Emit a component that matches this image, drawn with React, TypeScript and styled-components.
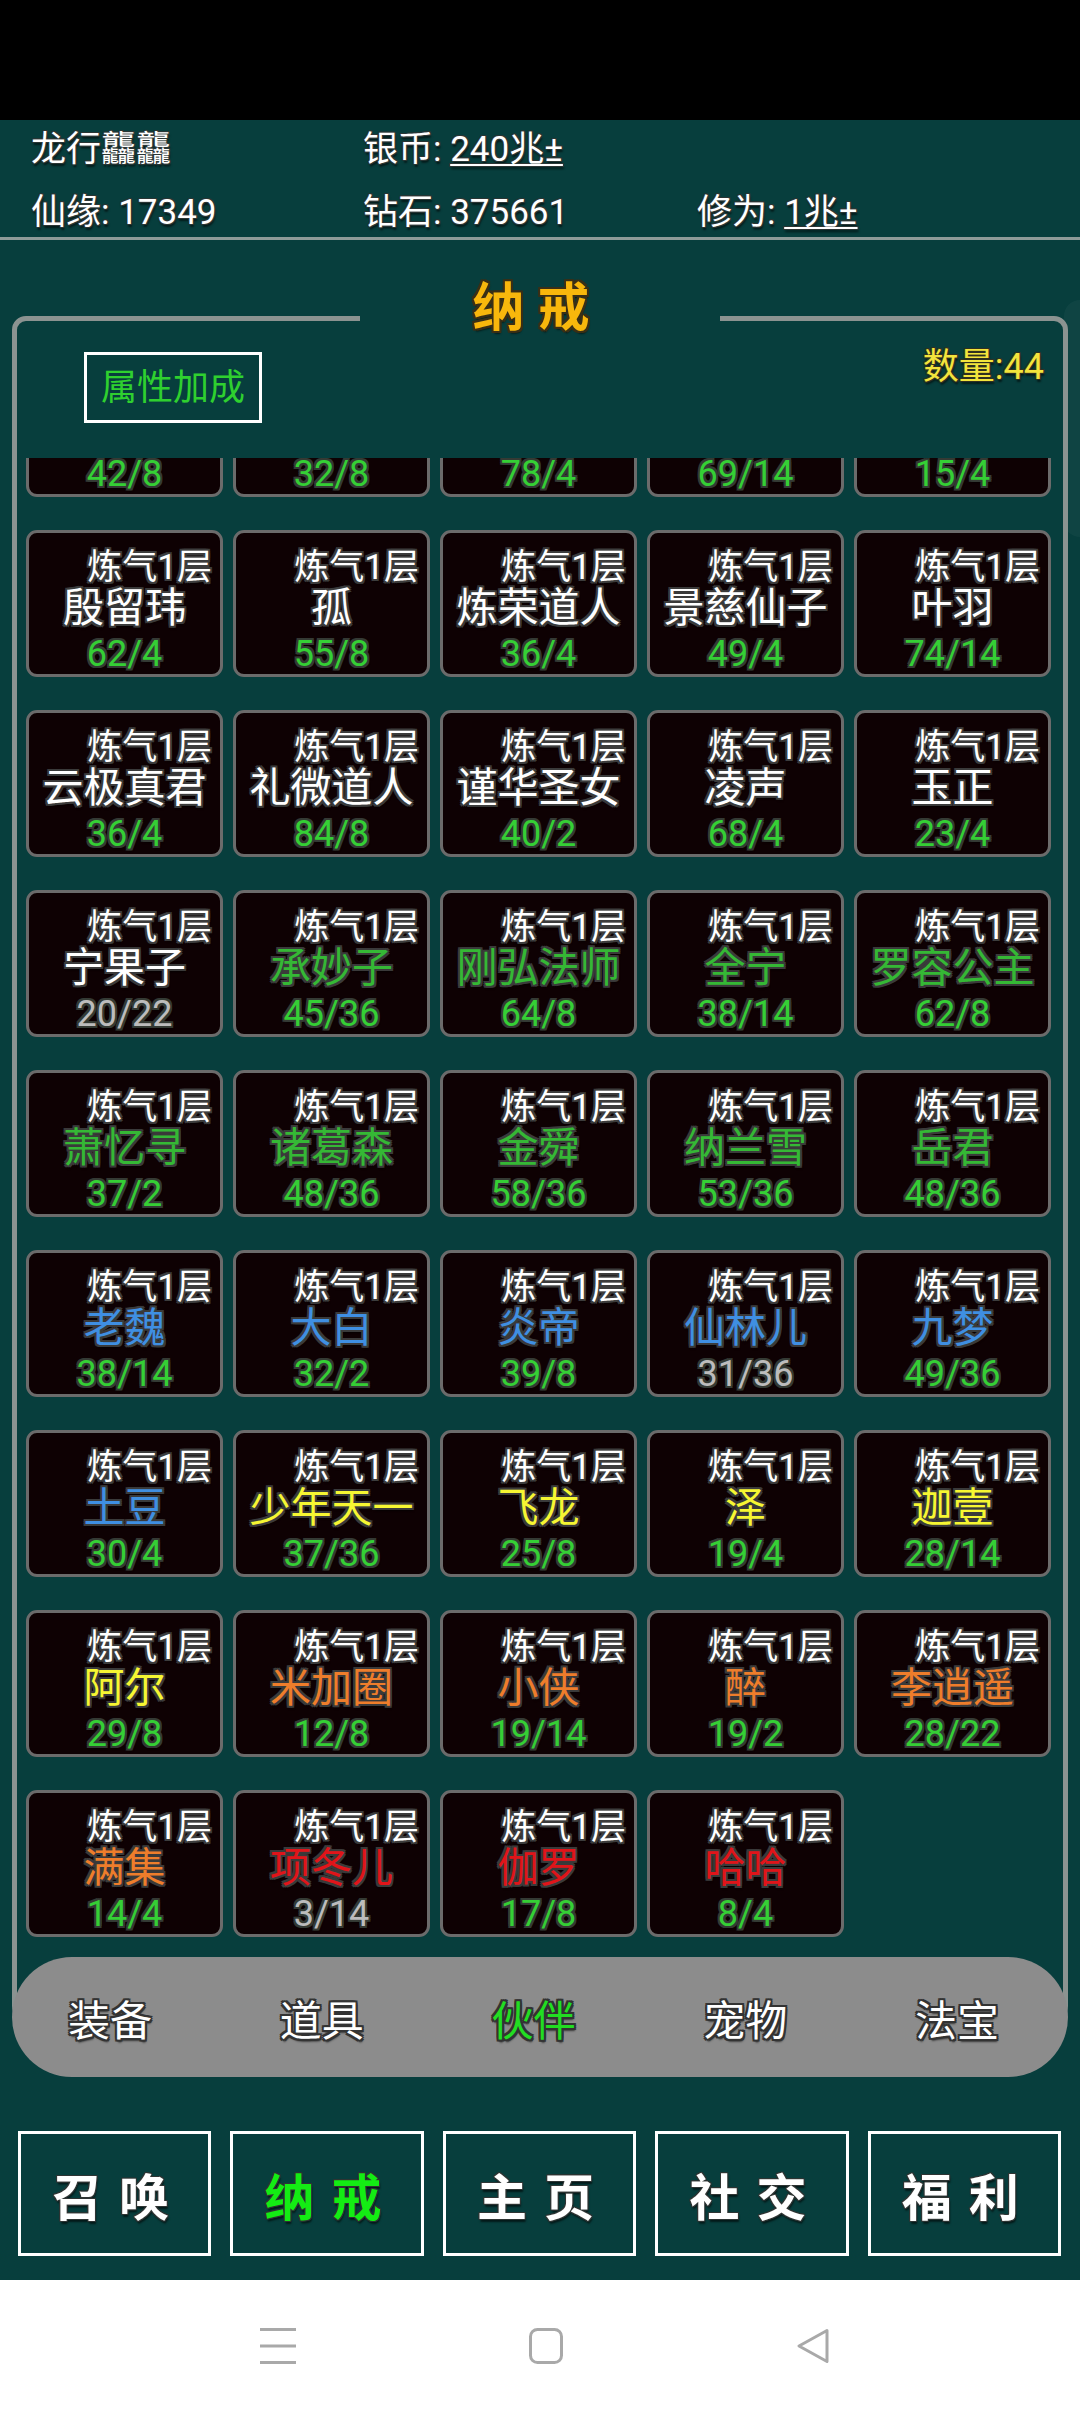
import React, { useLayoutEffect, useRef } from "react";
import styled, { createGlobalStyle, css } from "styled-components";

const TEAL = "#073e3d";

const GlobalStyle = createGlobalStyle`
  html, body { margin: 0; padding: 0; background: #ffffff; }
  body { font-family: Roboto, "Noto Sans CJK SC", sans-serif; }
  * { box-sizing: border-box; }
`;

const outline = (c: string, w = 2) => css`
  text-shadow: -${w}px -${w}px 0 ${c}, ${w}px -${w}px 0 ${c}, -${w}px ${w}px 0 ${c},
    ${w}px ${w}px 0 ${c}, 0 ${w}px 0 ${c}, 0 -${w}px 0 ${c}, ${w}px 0 0 ${c}, -${w}px 0 0 ${c},
    1px 3px 2px rgba(0, 0, 0, 0.6);
`;

const Screen = styled.div`
  width: 1080px;
  height: 2412px;
  display: flex;
  flex-direction: column;
  overflow: hidden;
`;

const StatusBar = styled.div`
  height: 120px;
  flex: none;
  background: #000;
`;

const Header = styled.header`
  flex: none;
  height: 120px;
  background: ${TEAL};
  border-bottom: 3px solid #8e9b99;
  padding: 5px 0 0 31px;
  display: grid;
  grid-template-columns: 332px 334px 1fr;
  grid-template-rows: 50px 50px;
  row-gap: 13px;
  align-items: center;
`;

const HeaderCell = styled.div`
  color: #fff;
  font-size: 35px;
  line-height: 50px;
  white-space: nowrap;
  ${outline("#2a3534", 1)}
`;

const Under = styled.span`
  text-decoration: underline;
  text-decoration-thickness: 2px;
  text-underline-offset: 3px;
`;

const Panel = styled.main`
  flex: 1;
  position: relative;
  background: ${TEAL};
  display: flex;
  flex-direction: column;
  padding: 76px 12px 24px;
`;

const EdgeGlow = styled.div`
  position: absolute;
  right: 0;
  top: 60px;
  width: 16px;
  height: 237px;
  border-radius: 16px 0 0 16px;
  background: rgba(255, 255, 255, 0.035);
`;

const Frame = styled.section`
  position: relative;
  border: 5px solid #8b9391;
  border-radius: 14px;
  padding-bottom: 60px;
  display: flex;
  flex-direction: column;
`;

const Title = styled.h1`
  position: absolute;
  top: -53px;
  left: 50%;
  transform: translateX(-50%);
  width: 360px;
  height: 70px;
  margin: 0;
  padding-right: 18px;
  background: ${TEAL};
  display: flex;
  align-items: center;
  justify-content: center;
  font-size: 52px;
  font-weight: 700;
  color: #f8b70c;
  white-space: pre;
  ${outline("#3a2f16", 2)}
`;

const TopBar = styled.div`
  height: 137px;
  display: flex;
  justify-content: space-between;
  align-items: flex-start;
  padding: 26px 19px 0 67px;
`;

const AttrButton = styled.button`
  margin-top: 5px;
  width: 178px;
  height: 71px;
  border: 3px solid #ffffff;
  background: transparent;
  color: #2fd02f;
  font-family: inherit;
  font-size: 36px;
  line-height: 44px;
  display: flex;
  align-items: center;
  justify-content: center;
  padding: 0;
`;

const Count = styled.div`
  color: #f3e43c;
  font-size: 36px;
  line-height: 40px;
  ${outline("#303020", 1)}
`;

const Scroller = styled.div`
  height: 1497px;
  overflow-y: auto;
  scrollbar-width: none;
  &::-webkit-scrollbar {
    display: none;
  }
`;

const Grid = styled.div`
  display: grid;
  grid-template-columns: repeat(5, 197px);
  grid-auto-rows: 147px;
  column-gap: 10px;
  row-gap: 33px;
  padding: 0 12px 30px 9px;
`;

const Card = styled.div`
  border: 3px solid #6b6b6b;
  border-radius: 11px;
  background: #0e0103;
  padding: 15px 8px 0;
  display: flex;
  flex-direction: column;
  white-space: nowrap;
`;

const Level = styled.div`
  text-align: right;
  font-size: 35px;
  line-height: 40px;
  color: #ffffff;
  ${outline("#3c3c3c", 2)}
`;

const Name = styled.div<{ $c: string }>`
  text-align: center;
  font-size: 41px;
  line-height: 40px;
  color: ${(p) => p.$c};
  ${outline("#3a3a3a", 2)}
`;

const Stat = styled.div<{ $c: string }>`
  margin-top: 6px;
  text-align: center;
  font-size: 36px;
  line-height: 40px;
  color: ${(p) => p.$c};
  ${outline("#343a34", 2)}
`;

const TabPill = styled.nav`
  position: relative;
  z-index: 1;
  margin-top: -63px;
  height: 120px;
  background: #8c8c8c;
  border-radius: 60px;
  display: flex;
  align-items: center;
  justify-content: space-between;
  padding: 0 69px 0 56px;
`;

const TabLabel = styled.span<{ $active?: boolean }>`
  font-size: 42px;
  color: ${(p) => (p.$active ? "#22dd22" : "#ffffff")};
  ${outline("#333333", 2)}
`;

const NavRow = styled.div`
  margin-top: 54px;
  display: flex;
  gap: 19px;
  padding: 0 7px 0 6px;
`;

const NavButton = styled.button<{ $active?: boolean }>`
  flex: 1;
  height: 125px;
  border: 3px solid #ffffff;
  background: transparent;
  display: flex;
  align-items: center;
  justify-content: center;
  padding: 0;
  font-family: inherit;
  font-size: 50px;
  font-weight: 700;
  color: ${(p) => (p.$active ? "#14ec14" : "#ffffff")};
  ${outline("#2e3433", 1)}
`;

const NavText = styled.span`
  letter-spacing: 17px;
  margin-right: -9px;
`;

const SystemBar = styled.div`
  flex: none;
  height: 132px;
  background: #ffffff;
  display: flex;
  align-items: center;
  padding-left: 260px;
  gap: 233px;
`;

type NC = "white" | "green" | "blue" | "yellow" | "orange" | "red";
const nameColor: Record<NC, string> = {
  white: "#ffffff",
  green: "#35b835",
  blue: "#3f8fe2",
  yellow: "#f6f632",
  orange: "#ee7d2b",
  red: "#e01419",
};
const statColor = { g: "#35cf35", s: "#bcbcbc" };

type Member = { n: string; c: NC; s: string; sc?: "g" | "s" };

const members: Member[] = [
  { n: "青云子", c: "white", s: "42/8" },
  { n: "明月", c: "white", s: "32/8" },
  { n: "白泽", c: "white", s: "78/4" },
  { n: "灵虚子", c: "white", s: "69/14" },
  { n: "玄机", c: "white", s: "15/4" },

  { n: "殷留玮", c: "white", s: "62/4" },
  { n: "孤", c: "white", s: "55/8" },
  { n: "炼荣道人", c: "white", s: "36/4" },
  { n: "景慈仙子", c: "white", s: "49/4" },
  { n: "叶羽", c: "white", s: "74/14" },

  { n: "云极真君", c: "white", s: "36/4" },
  { n: "礼微道人", c: "white", s: "84/8" },
  { n: "谨华圣女", c: "white", s: "40/2" },
  { n: "凌声", c: "white", s: "68/4" },
  { n: "玉正", c: "white", s: "23/4" },

  { n: "宁果子", c: "white", s: "20/22", sc: "s" },
  { n: "承妙子", c: "green", s: "45/36" },
  { n: "刚弘法师", c: "green", s: "64/8" },
  { n: "全宁", c: "green", s: "38/14" },
  { n: "罗容公主", c: "green", s: "62/8" },

  { n: "萧忆寻", c: "green", s: "37/2" },
  { n: "诸葛森", c: "green", s: "48/36" },
  { n: "金舜", c: "green", s: "58/36" },
  { n: "纳兰雪", c: "green", s: "53/36" },
  { n: "岳君", c: "green", s: "48/36" },

  { n: "老魏", c: "blue", s: "38/14" },
  { n: "大白", c: "blue", s: "32/2" },
  { n: "炎帝", c: "blue", s: "39/8" },
  { n: "仙林儿", c: "blue", s: "31/36", sc: "s" },
  { n: "九梦", c: "blue", s: "49/36" },

  { n: "土豆", c: "blue", s: "30/4" },
  { n: "少年天一", c: "yellow", s: "37/36" },
  { n: "飞龙", c: "yellow", s: "25/8" },
  { n: "泽", c: "yellow", s: "19/4" },
  { n: "迦壹", c: "yellow", s: "28/14" },

  { n: "阿尔", c: "yellow", s: "29/8" },
  { n: "米加圈", c: "orange", s: "12/8" },
  { n: "小侠", c: "orange", s: "19/14" },
  { n: "醉", c: "orange", s: "19/2" },
  { n: "李逍遥", c: "orange", s: "28/22" },

  { n: "满集", c: "orange", s: "14/4" },
  { n: "项冬儿", c: "red", s: "3/14", sc: "s" },
  { n: "伽罗", c: "red", s: "17/8" },
  { n: "哈哈", c: "red", s: "8/4" },
];

const tabs = ["装备", "道具", "伙伴", "宠物", "法宝"];
const navs = ["召唤", "纳戒", "主页", "社交", "福利"];

const MenuIcon = () => (
  <svg width="36" height="36" viewBox="0 0 36 36">
    <g stroke="#a9a9a9" strokeWidth="3">
      <line x1="0" y1="1.5" x2="36" y2="1.5" />
      <line x1="0" y1="18" x2="36" y2="18" />
      <line x1="0" y1="34.5" x2="36" y2="34.5" />
    </g>
  </svg>
);

const HomeIcon = () => (
  <svg width="34" height="36" viewBox="0 0 34 36">
    <rect x="1.5" y="1.5" width="31" height="33" rx="7" fill="none" stroke="#a9a9a9" strokeWidth="3" />
  </svg>
);

const BackIcon = () => (
  <svg width="34" height="36" viewBox="0 0 34 36">
    <path
      d="M31 2.5 L3 18 L31 33.5 Z"
      fill="none"
      stroke="#a9a9a9"
      strokeWidth="3"
      strokeLinejoin="round"
    />
  </svg>
);

export default function App() {
  const scrollRef = useRef<HTMLDivElement>(null);
  useLayoutEffect(() => {
    if (scrollRef.current) scrollRef.current.scrollTop = 108;
  }, []);

  return (
    <Screen>
      <GlobalStyle />
      <StatusBar />
      <Header>
        <HeaderCell>龙行龘龘</HeaderCell>
        <HeaderCell>
          银币: <Under>240兆±</Under>
        </HeaderCell>
        <HeaderCell />
        <HeaderCell>仙缘: 17349</HeaderCell>
        <HeaderCell>钻石: 375661</HeaderCell>
        <HeaderCell>
          修为: <Under>1兆±</Under>
        </HeaderCell>
      </Header>
      <Panel>
        <EdgeGlow />
        <Frame>
          <Title>{"纳 戒"}</Title>
          <TopBar>
            <AttrButton>属性加成</AttrButton>
            <Count>数量:44</Count>
          </TopBar>
          <Scroller ref={scrollRef}>
            <Grid>
              {members.map((m, i) => (
                <Card key={i}>
                  <Level>炼气1层</Level>
                  <Name $c={nameColor[m.c]}>{m.n}</Name>
                  <Stat $c={statColor[m.sc ?? "g"]}>{m.s}</Stat>
                </Card>
              ))}
            </Grid>
          </Scroller>
        </Frame>
        <TabPill>
          {tabs.map((t) => (
            <TabLabel key={t} $active={t === "伙伴"}>
              {t}
            </TabLabel>
          ))}
        </TabPill>
        <NavRow>
          {navs.map((t) => (
            <NavButton key={t} $active={t === "纳戒"}>
              <NavText>{t}</NavText>
            </NavButton>
          ))}
        </NavRow>
      </Panel>
      <SystemBar>
        <MenuIcon />
        <HomeIcon />
        <BackIcon />
      </SystemBar>
    </Screen>
  );
}
